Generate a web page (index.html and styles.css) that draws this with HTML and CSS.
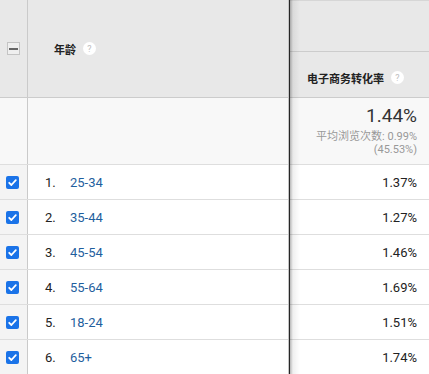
FILE: index.html
```html
<!DOCTYPE html>
<html lang="zh">
<head>
<meta charset="utf-8">
<link rel="stylesheet" href="styles.css">
</head>
<body>
<div class="report">
  <div class="pane left">
    <div class="row head">
      <div class="cb-cell"><span class="cb-minus"><span class="bar"></span></span></div>
      <div class="dim-cell head-title">年龄<span class="help">?</span></div>
    </div>
    <div class="row summary">
      <div class="cb-cell"></div>
      <div class="dim-cell"></div>
    </div>
    <div class="row item">
      <div class="cb-cell"><svg class="cb" viewBox="0 0 13 13"><rect width="13" height="13" rx="2" fill="#1a73e8"/><path d="M3.2 6.8l2.2 2.2 4.4-4.8" fill="none" stroke="#fff" stroke-width="1.8" stroke-linecap="round" stroke-linejoin="round"/></svg></div>
      <div class="dim-cell"><span class="num">1.</span><a class="link">25-34</a></div>
    </div>
    <div class="row item">
      <div class="cb-cell"><svg class="cb" viewBox="0 0 13 13"><rect width="13" height="13" rx="2" fill="#1a73e8"/><path d="M3.2 6.8l2.2 2.2 4.4-4.8" fill="none" stroke="#fff" stroke-width="1.8" stroke-linecap="round" stroke-linejoin="round"/></svg></div>
      <div class="dim-cell"><span class="num">2.</span><a class="link">35-44</a></div>
    </div>
    <div class="row item">
      <div class="cb-cell"><svg class="cb" viewBox="0 0 13 13"><rect width="13" height="13" rx="2" fill="#1a73e8"/><path d="M3.2 6.8l2.2 2.2 4.4-4.8" fill="none" stroke="#fff" stroke-width="1.8" stroke-linecap="round" stroke-linejoin="round"/></svg></div>
      <div class="dim-cell"><span class="num">3.</span><a class="link">45-54</a></div>
    </div>
    <div class="row item">
      <div class="cb-cell"><svg class="cb" viewBox="0 0 13 13"><rect width="13" height="13" rx="2" fill="#1a73e8"/><path d="M3.2 6.8l2.2 2.2 4.4-4.8" fill="none" stroke="#fff" stroke-width="1.8" stroke-linecap="round" stroke-linejoin="round"/></svg></div>
      <div class="dim-cell"><span class="num">4.</span><a class="link">55-64</a></div>
    </div>
    <div class="row item">
      <div class="cb-cell"><svg class="cb" viewBox="0 0 13 13"><rect width="13" height="13" rx="2" fill="#1a73e8"/><path d="M3.2 6.8l2.2 2.2 4.4-4.8" fill="none" stroke="#fff" stroke-width="1.8" stroke-linecap="round" stroke-linejoin="round"/></svg></div>
      <div class="dim-cell"><span class="num">5.</span><a class="link">18-24</a></div>
    </div>
    <div class="row item">
      <div class="cb-cell"><svg class="cb" viewBox="0 0 13 13"><rect width="13" height="13" rx="2" fill="#1a73e8"/><path d="M3.2 6.8l2.2 2.2 4.4-4.8" fill="none" stroke="#fff" stroke-width="1.8" stroke-linecap="round" stroke-linejoin="round"/></svg></div>
      <div class="dim-cell"><span class="num">6.</span><a class="link">65+</a></div>
    </div>
  </div>
  <div class="divider"></div>
  <div class="pane right">
    <div class="head-top"></div>
    <div class="head-sub">电子商务转化率<span class="help">?</span></div>
    <div class="sum-cell">
      <div class="big">1.44%</div>
      <div class="avg">平均浏览次数: 0.99%</div>
      <div class="avg">(45.53%)</div>
    </div>
    <div class="val">1.37%</div>
    <div class="val">1.27%</div>
    <div class="val">1.46%</div>
    <div class="val">1.69%</div>
    <div class="val">1.51%</div>
    <div class="val">1.74%</div>
  </div>
</div>
</body>
</html>
```

FILE: styles.css
```css
* { box-sizing: border-box; }
html, body {
  margin: 0;
  padding: 0;
  background: #fff;
  overflow: hidden;
}
body {
  font-family: Roboto, "Noto Sans CJK SC", sans-serif;
  color: #222;
}
.report {
  display: flex;
  width: 429px;
  height: 374px;
  overflow: hidden;
}
.pane.left {
  width: 289px;
  flex: none;
  border-right: 1px solid #c4c4c4;
}
.divider {
  width: 1px;
  flex: none;
  background: #262626;
}
.pane.right {
  flex: 1;
  position: relative;
}
.pane.right::after {
  content: "";
  position: absolute;
  left: 0;
  top: 0;
  bottom: 0;
  width: 10px;
  background: linear-gradient(to right, rgba(0,0,0,0.28), rgba(0,0,0,0.06) 30%, rgba(0,0,0,0));
  pointer-events: none;
}
.row {
  display: flex;
  border-bottom: 1px solid #dedede;
}
.row.head {
  height: 98px;
  background: #e8e8e8;
  border-bottom-color: #cccccc;
}
.row.summary {
  height: 67px;
  background: #f8f8f8;
}
.row.item {
  height: 35px;
  background: #fff;
}
.cb-cell {
  width: 28px;
  flex: none;
  border-right: 1px solid #cacaca;
  display: flex;
  align-items: center;
  padding-left: 6px;
}
.row.item .cb-cell {
  background: #f4f4f4;
}
.cb {
  width: 13px;
  height: 13px;
  display: block;
}
.cb-minus {
  width: 13px;
  height: 13px;
  margin-left: 1px;
  border: 1px solid #c4c4c4;
  background: #efefef;
  display: flex;
  align-items: center;
  justify-content: center;
}
.cb-minus .bar {
  width: 9px;
  height: 2px;
  background: #666;
}
.dim-cell {
  flex: 1;
  display: flex;
  align-items: center;
  padding-left: 17px;
  font-size: 13px;
}
.head-title {
  padding-left: 26px;
  font-size: 11px;
  font-weight: 700;
  color: #222;
}
.help {
  display: inline-flex;
  align-items: center;
  justify-content: center;
  width: 13px;
  height: 13px;
  border-radius: 50%;
  background: #fff;
  color: #bdbdbd;
  font-size: 9px;
  font-weight: 400;
  margin-left: 7px;
  font-family: Roboto, sans-serif;
}
.num {
  width: 25px;
  color: #222;
}
.link {
  color: #1f5f9e;
  text-decoration: none;
}
.head-top {
  height: 52px;
  background: #e8e8e8;
  border-top: 1px solid #d6d6d6;
  border-bottom: 1px solid #cccccc;
}
.head-sub {
  height: 46px;
  background: #e8e8e8;
  border-bottom: 1px solid #cccccc;
  display: flex;
  align-items: center;
  padding-left: 17px;
  padding-top: 6px;
  font-size: 11px;
  font-weight: 700;
}
.head-sub .help {
  margin-left: 7px;
}
.sum-cell {
  height: 67px;
  background: #f8f8f8;
  border-bottom: 1px solid #dedede;
  text-align: right;
  padding: 7px 12px 0 0;
}
.big {
  font-size: 19px;
  line-height: 22px;
  color: #333;
  margin-bottom: 3px;
}
.avg {
  font-size: 11px;
  line-height: 13px;
  color: #999;
}
.val {
  height: 35px;
  border-bottom: 1px solid #dedede;
  display: flex;
  align-items: center;
  justify-content: flex-end;
  padding-right: 12px;
  font-size: 13px;
  color: #222;
}
```
